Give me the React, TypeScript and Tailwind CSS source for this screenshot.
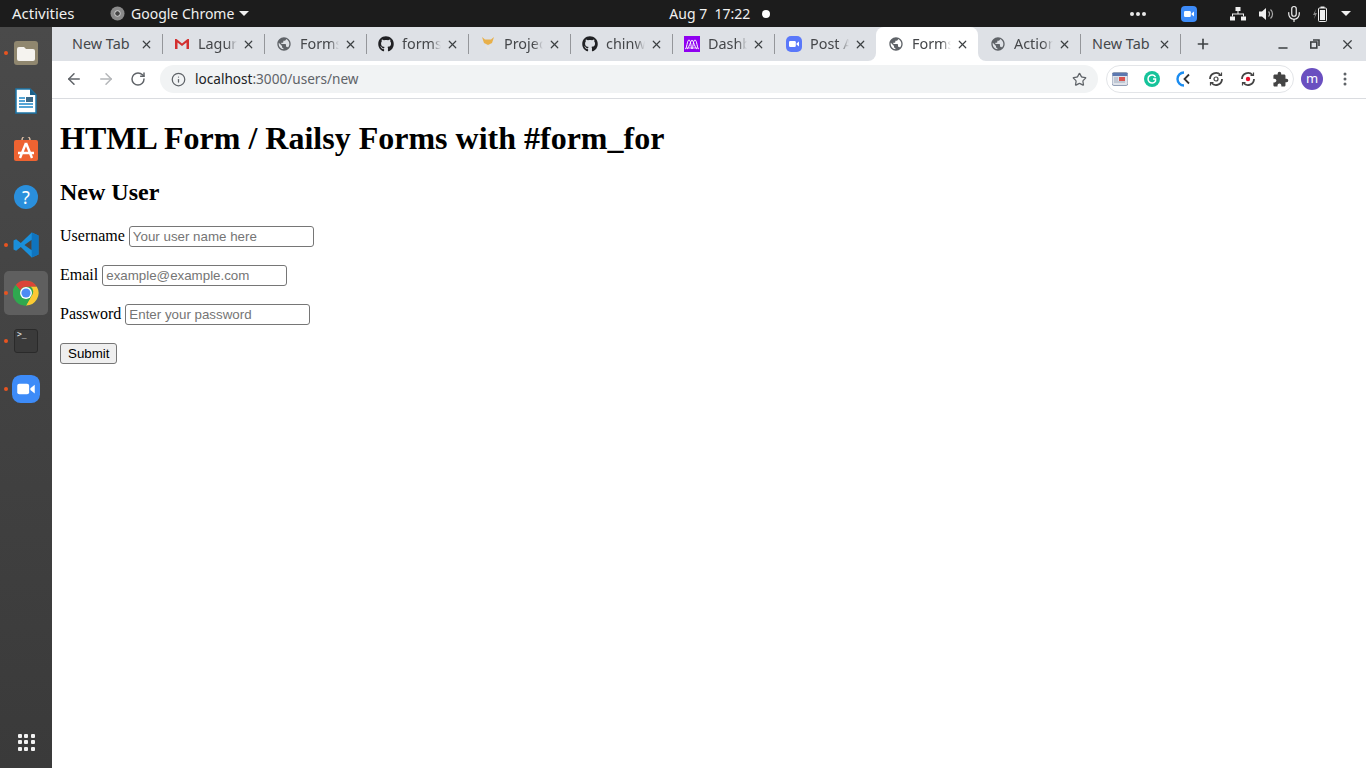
import React from 'react';
import { ArrowLeft, ArrowRight, RotateCw, Info, Star, X, Plus, Minus, Mic } from 'lucide-react';
import { FaGithub } from 'react-icons/fa';
import { MdPublic, MdExtension } from 'react-icons/md';

const uiFont = 'font-["Noto_Sans",sans-serif]';

const GmailIcon = () => (
  <svg width="16" height="16" viewBox="0 0 16 16">
    <path d="M1 3v10h2.5V6.5L8 10l4.5-3.5V13H15V3h-1.5L8 7.5 2.5 3z" fill="#d32f2f" />
  </svg>
);

const ProjectIcon = () => (
  <svg width="16" height="16" viewBox="0 0 16 16">
    <path d="M2 1l3 2.500h6L14 1l-2 6-4 2-4-2z" fill="#e8b04a" />
    <path d="M5 9l3 6 3-6-3 2z" fill="#e9e6df" />
  </svg>
);

const DashIcon = () => (
  <svg width="16" height="16" viewBox="0 0 16 16">
    <rect width="16" height="16" fill="#8f00f0" />
    <path d="M1 13c2 0 2-9 4-9s2 9 3 9 1-9 3-9 2 9 4 9M3 13c1.500 0 4-9 5-9s3.500 9 5 9" fill="none" stroke="#fff" strokeWidth="1" />
    <path d="M2 12h12" stroke="#fff" strokeWidth="0.8" />
  </svg>
);

const ZoomIcon = ({ size, color = '#5a78fa', radius = 5 }: { size: number; color?: string; radius?: number }) => (
  <svg width={size} height={size} viewBox="0 0 16 16">
    <rect width="16" height="16" rx={radius} fill={color} />
    <rect x="3" y="5" width="6.800" height="6" rx="1.200" fill="#fff" />
    <path d="M10.500 7.500l2.500-2v5l-2.500-2z" fill="#fff" />
  </svg>
);

const globe = <MdPublic size={18} color="#5f6368" />;
const github = <FaGithub size={16} color="#202124" />;

const tabs = [
  { title: 'New Tab', width: 102 },
  { title: 'Lagur', icon: <GmailIcon />, width: 102 },
  { title: 'Forms', icon: globe, width: 102 },
  { title: 'forms', icon: github, width: 102 },
  { title: 'Projec', icon: <ProjectIcon />, width: 102 },
  { title: 'chinw', icon: github, width: 102 },
  { title: 'Dashb', icon: <DashIcon />, width: 102 },
  { title: 'Post A', icon: <ZoomIcon size={16} />, width: 102 },
  { title: 'Forms', icon: globe, width: 102, active: true },
  { title: 'Action', icon: globe, width: 102 },
  { title: 'New Tab', width: 100 },
];

const Tab = ({ title, icon, width, active, noSeparator }: { title: string; icon?: React.ReactNode; width: number; active?: boolean; noSeparator?: boolean }) => (
  <div
    style={{ width }}
    className={`relative flex items-center h-full pl-3 pr-[9px] shrink-0 ${active ? 'bg-white rounded-t-lg' : ''}`}
  >
    {active && (
      <>
        <span className="absolute left-[-8px] bottom-0 w-2 h-2 bg-white">
          <span className="block w-2 h-2 bg-[#dee1e6] rounded-br-lg" />
        </span>
        <span className="absolute right-[-8px] bottom-0 w-2 h-2 bg-white">
          <span className="block w-2 h-2 bg-[#dee1e6] rounded-bl-lg" />
        </span>
      </>
    )}
    {icon && <span className="w-4 h-4 mr-2 flex items-center justify-center shrink-0">{icon}</span>}
    <span
      className={`text-[14.4px] text-[#45474a] whitespace-nowrap overflow-hidden ${icon ? 'w-[39px] [mask-image:linear-gradient(to_right,black_75%,transparent)]' : ''}`}
    >
      {title}
    </span>
    <X size={13} strokeWidth={2.2} color="#3c4043" className="ml-auto shrink-0" />
    {!noSeparator && <span className="absolute right-[-1px] top-[7px] h-5 w-px bg-[#94969a]" />}
  </div>
);

const Dot = () => <span className="absolute left-[4px] top-[22px] w-[4px] h-[4px] rounded-full bg-[#e95420]" />;

const DockItem = ({ children, running, active }: { children: React.ReactNode; running?: boolean; active?: boolean }) => (
  <div className="relative h-12 flex items-center justify-center">
    {active && <span className="absolute left-1 top-[2px] w-11 h-11 rounded-[5px] bg-[#5f5f5f]" />}
    {running && <Dot />}
    <span className="relative flex">{children}</span>
  </div>
);

const Dock = () => (
  <aside className="w-[52px] shrink-0 bg-linear-to-b from-[#4a4a4a] to-[#3a3a3a] flex flex-col pt-[2px] pb-[2px]">
    <DockItem running>
      <svg width="24" height="24" viewBox="0 0 24 24">
        <rect width="24" height="24" rx="3" fill="#90876f" />
        <path d="M3 8a2 2 0 0 1 2-2h5l2 2h7a2 2 0 0 1 2 2v8a2 2 0 0 1-2 2H5a2 2 0 0 1-2-2z" fill="#f5f3ef" />
      </svg>
    </DockItem>
    <DockItem>
      <svg width="22" height="26" viewBox="0 0 22 26">
        <path d="M1 1h14l6 6v18H1z" fill="#fff" stroke="#1c76a8" strokeWidth="1.500" />
        <path d="M15 1l6 6h-6z" fill="#1c5f88" />
        <path d="M4 10h6M4 13h6M4 16h14M4 19h14" stroke="#1c86c8" strokeWidth="1.500" />
        <rect x="11" y="9" width="7" height="5" fill="#3b6a8a" />
      </svg>
    </DockItem>
    <DockItem>
      <svg width="24" height="24" viewBox="0 0 24 24">
        <path d="M8 4V3a4 4 0 0 1 8 0v1" fill="none" stroke="#d8b9a0" strokeWidth="1.500" />
        <rect y="3" width="24" height="21" rx="2" fill="#ee6331" />
        <path d="M12 6L6 21M12 6l6 15M4 16h16" stroke="#fff" strokeWidth="2.400" fill="none" />
      </svg>
    </DockItem>
    <DockItem>
      <span className="w-6 h-6 rounded-full bg-[#2a8fdc] text-white text-[18px] leading-6 text-center font-['Noto_Sans',sans-serif]">?</span>
    </DockItem>
    <DockItem running>
      <svg width="26" height="26" viewBox="0 0 100 100">
        <path d="M72 2L30 42 12 28 2 33v34l10 5 18-14 42 40 26-11V13zM72 30v40L44 50z" fill="#1a8fdb" fillRule="evenodd" />
        <path d="M72 2l26 11v74L72 98z" fill="#0f74bf" />
      </svg>
    </DockItem>
    <DockItem running active>
      <svg width="26" height="26" viewBox="0 0 48 48">
        <circle cx="24" cy="24" r="23" fill="#2fa84f" />
        <path d="M24 1a23 23 0 0 1 20 11.500H24a11.500 11.500 0 0 0-10.600 7L5 9a23 23 0 0 1 19-8z" fill="#db4437" />
        <path d="M44 12.500A23 23 0 0 1 24 47l10-17.500a11.500 11.500 0 0 0-1-17z" fill="#fcc934" />
        <path d="M5 9a23 23 0 0 0 19 38l10-17.500a11.500 11.500 0 0 1-20.600-10z" fill="#2fa84f" />
        <circle cx="24" cy="24" r="11" fill="#fff" />
        <circle cx="24" cy="24" r="8.500" fill="#4c8bf5" />
      </svg>
    </DockItem>
    <DockItem running>
      <span className="w-6 h-6 rounded-[3px] bg-[#3a3a3a] border border-[#2a2a2a] text-[#e8e8e8] text-[8px] leading-[9px] pl-[2px] font-['DejaVu_Sans_Mono',monospace]">&gt;_</span>
    </DockItem>
    <DockItem running>
      <ZoomIcon size={28} color="#3d8bf8" radius={5} />
    </DockItem>
    <div className="mt-auto h-12 flex items-center justify-center">
      <div className="grid grid-cols-3 gap-[2.500px]">
        {[0, 1, 2, 3, 4, 5, 6, 7, 8].map((n) => (
          <span key={n} className="w-1 h-1 bg-[#f2f2f2] rounded-[1px]" />
        ))}
      </div>
    </div>
  </aside>
);

const TopBar = () => (
  <header className="h-[27px] shrink-0 bg-[#1c1c1c] text-[#f0f0f0] text-[14px] flex items-center">
    <span className="ml-3 w-[98px] text-[15px]">Activities</span>
    <svg width="15" height="15" viewBox="0 0 16 16">
      <circle cx="8" cy="8" r="7.500" fill="#8a8a8a" />
      <circle cx="8" cy="8" r="3" fill="#444" stroke="#ddd" strokeWidth="1" />
    </svg>
    <span className="ml-[6px]">Google Chrome</span>
    <span className="ml-[5px] w-0 h-0 border-x-[5px] border-x-transparent border-t-[5px] border-t-[#f0f0f0]" />
    <span className="ml-[420px]">Aug 7&nbsp;&nbsp;17:22</span>
    <span className="ml-[12px] w-2 h-2 rounded-full bg-white" />
    <div className="ml-auto flex items-center mr-[15px]">
      <div className="flex gap-[2px]">
        <span className="w-1 h-1 rounded-full bg-[#e8e8e8]" />
        <span className="w-1 h-1 rounded-full bg-[#e8e8e8]" />
        <span className="w-1 h-1 rounded-full bg-[#e8e8e8]" />
      </div>
      <span className="ml-[35px] flex"><ZoomIcon size={16} color="#3d8bf8" radius={4} /></span>
      <svg className="ml-[33px]" width="16" height="14" viewBox="0 0 16 14" fill="#f0f0f0">
        <rect x="5.500" y="0" width="5" height="4" />
        <rect x="0" y="9.500" width="5" height="4" />
        <rect x="11" y="9.500" width="5" height="4" />
        <path d="M7.500 4h1v2.500h5.500v3h-1v-2H3v2H2v-3h5.500z" />
      </svg>
      <svg className="ml-[13px]" width="16" height="14" viewBox="0 0 16 14">
        <path d="M0 4.500h3L7 1v12L3 9.500H0z" fill="#f0f0f0" />
        <path d="M9.500 4.500a3.500 3.500 0 0 1 0 5M11.500 2.500a6 6 0 0 1 0 9" fill="none" stroke="#aaa" strokeWidth="1.200" />
      </svg>
      <Mic className="ml-[10px]" size={18} color="#f0f0f0" strokeWidth={1.600} />
      <svg className="ml-[10px]" width="14" height="16" viewBox="0 0 14 16">
        <path d="M3 3L0 9h2l-1 4 3-6H2z" fill="#888" />
        <rect x="5.500" y="2" width="8" height="13.500" rx="1" fill="none" stroke="#f0f0f0" strokeWidth="1" />
        <rect x="7.500" y="0.500" width="4" height="1.500" fill="#f0f0f0" />
        <rect x="7" y="4" width="5" height="10" fill="#f0f0f0" />
      </svg>
      <span className="ml-[14px] w-0 h-0 border-x-[5px] border-x-transparent border-t-[5px] border-t-[#f0f0f0]" />
    </div>
  </header>
);

const TabStrip = () => (
  <div className="h-[34px] bg-[#dee1e6] flex items-center pl-2 shrink-0">
    {tabs.map((tab, i) => (
      <Tab
        key={i}
        title={tab.title}
        icon={tab.icon}
        width={tab.width}
        active={tab.active}
        noSeparator={tab.active || tabs[i + 1]?.active}
      />
    ))}
    <Plus className="ml-[15px]" size={16} strokeWidth={2.400} color="#3c4043" />
    <div className="ml-auto flex items-center mr-[11px]">
      <Minus size={14} strokeWidth={2.200} color="#3c4043" className="translate-y-[4px]" />
      <svg className="ml-[20px]" width="10" height="10" viewBox="0 0 10 10" fill="none" stroke="#3c4043" strokeWidth="1.600">
        <rect x="0.800" y="3" width="6" height="6" />
        <path d="M3 1h6v6" />
      </svg>
      <X className="ml-[20px]" size={15} strokeWidth={2} color="#3c4043" />
    </div>
  </div>
);

const Toolbar = () => (
  <div className="h-[38px] shrink-0 bg-white border-b border-[#dadce0] flex items-center pb-px">
    <ArrowLeft className="ml-[13px]" size={18} strokeWidth={2} color="#5f6368" />
    <ArrowRight className="ml-[14px]" size={18} strokeWidth={2} color="#b4b6b9" />
    <RotateCw className="ml-[15px]" size={16} strokeWidth={2.200} color="#5f6368" />
    <div className="ml-[14px] w-[938px] h-7 rounded-full bg-[#f1f3f4] flex items-center pl-[11px] pr-[11px]">
      <Info size={15} strokeWidth={2} color="#5f6368" />
      <span className="ml-[9px] text-[13.6px] text-[#202124]">
        localhost<span className="text-[#5f6368]">:3000/users/new</span>
      </span>
      <Star className="ml-auto" size={15} strokeWidth={2} color="#5f6368" />
    </div>
    <div className="ml-2 w-[188px] h-7 shrink-0 rounded-full border border-[#e3e5e8] flex items-center pl-[5px]">
      <svg width="16" height="16" viewBox="0 0 16 16">
        <rect y="1.500" width="16" height="13" rx="2" fill="#dfe3ea" stroke="#7a8aa5" strokeWidth="0.800" />
        <rect x="0.500" y="2" width="15" height="3" fill="#5c78b0" />
        <rect x="7" y="6" width="6" height="4" fill="#d9534f" />
        <path d="M2 7h4M2 9h4M2 11h11" stroke="#9aa5b8" strokeWidth="0.900" />
      </svg>
      <span className="ml-4 w-4 h-4 rounded-full bg-[#15c39a] flex items-center justify-center">
        <svg width="10" height="10" viewBox="0 0 10 10" fill="none" stroke="#fff" strokeWidth="1.500">
          <path d="M8.500 3a4 4 0 1 0 0 4V5H6" />
        </svg>
      </span>
      <svg className="ml-4" width="16" height="16" viewBox="0 0 16 16" fill="none">
        <path d="M8 1.500a6.500 6.500 0 0 0 0 13" stroke="#1a8cf0" strokeWidth="2.400" />
        <path d="M13 3.500L8.500 8l4.500 4.500" stroke="#333" strokeWidth="1.800" />
      </svg>
      <svg className="ml-4" width="16" height="16" viewBox="0 0 16 16" fill="none">
        <path d="M2 8a6 6 0 0 1 10.500-4M14 8a6 6 0 0 1-10.500 4" stroke="#444" strokeWidth="1.800" />
        <path d="M10.500 4.500h3v-3M5.500 11.500h-3v3" stroke="#444" strokeWidth="1.200" />
        <circle cx="8" cy="8" r="2" stroke="#444" strokeWidth="1.200" />
      </svg>
      <svg className="ml-4" width="16" height="16" viewBox="0 0 16 16" fill="none">
        <path d="M2 8a6 6 0 0 1 10.500-4M14 8a6 6 0 0 1-10.500 4" stroke="#444" strokeWidth="1.800" />
        <path d="M10.500 4.500h3v-3M5.500 11.500h-3v3" stroke="#444" strokeWidth="1.200" />
        <circle cx="8" cy="8" r="2.200" fill="#e8112d" />
      </svg>
      <MdExtension className="ml-4" size={17} color="#444" />
    </div>
    <span className="ml-[7px] w-[22px] h-[22px] shrink-0 rounded-full bg-[#6a4fc0] text-white text-[13px] leading-[20px] text-center">m</span>
    <svg className="ml-5" width="4" height="14" viewBox="0 0 4 14" fill="#5f6368">
      <circle cx="2" cy="2" r="1.500" />
      <circle cx="2" cy="7" r="1.500" />
      <circle cx="2" cy="12" r="1.500" />
    </svg>
  </div>
);

const fieldClass =
  "w-[185px] h-[21px] border border-[#767676] rounded-[3px] px-[3px] py-px bg-white text-[13.333px] font-['Liberation_Sans',sans-serif] placeholder:text-[#757575]";

export default function App() {
  return (
    <div className={`w-[1366px] h-[768px] flex flex-col overflow-hidden ${uiFont}`}>
      <TopBar />
      <div className="flex flex-1 min-h-0">
        <Dock />
        <div className="flex-1 min-w-0 flex flex-col">
          <TabStrip />
          <Toolbar />
          <main className="flex-1 bg-white px-2 text-black text-[16px] leading-[normal] font-['Liberation_Serif',serif]">
            <h1 className="text-[32px] font-bold my-[21.44px] leading-[37px]">HTML Form / Railsy Forms with #form_for</h1>
            <h2 className="text-[24px] font-bold my-[19.92px] leading-[27px]">New User</h2>
            <form onSubmit={(e) => e.preventDefault()}>
              <p className="my-4 min-h-[23px]">
                <label htmlFor="username">Username</label>{' '}
                <input id="username" type="text" placeholder="Your user name here" className={fieldClass} />
              </p>
              <p className="my-4 min-h-[23px]">
                <label htmlFor="email">Email</label>{' '}
                <input id="email" type="email" placeholder="example@example.com" className={fieldClass} />
              </p>
              <p className="my-4 min-h-[23px]">
                <label htmlFor="password">Password</label>{' '}
                <input id="password" type="password" placeholder="Enter your password" className={fieldClass} />
              </p>
              <p className="my-4 min-h-[23px]">
                <button
                  type="submit"
                  className="h-[21px] px-[7px] border border-[#767676] rounded-[3px] bg-[#efefef] text-[13.333px] font-['Liberation_Sans',sans-serif]"
                >
                  Submit
                </button>
              </p>
            </form>
          </main>
        </div>
      </div>
    </div>
  );
}
